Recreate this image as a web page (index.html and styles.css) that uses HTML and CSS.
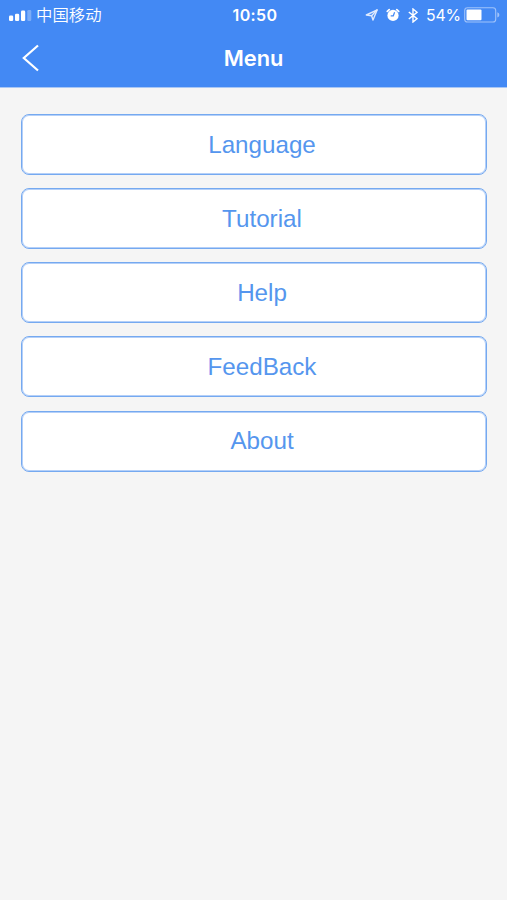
FILE: index.html
```html
<!DOCTYPE html>
<html lang="en">
<head>
<meta charset="utf-8">
<title>Menu</title>
<link rel="stylesheet" href="styles.css">
</head>
<body>
<header class="header">
  <div class="status">
    <div class="carrier">
      <svg class="signal" width="23" height="12" viewBox="0 0 23 12" fill="#fff">
        <rect x="0" y="5.4" width="4.2" height="5.6" rx="1.3"/>
        <rect x="6" y="3.8" width="4.2" height="7.2" rx="1.3"/>
        <rect x="12" y=".6" width="4.2" height="10.4" rx="1.3"/>
        <rect x="18.3" y="0" width="4" height="11" rx="1.3" opacity=".3"/>
      </svg>
      <span class="carrier-name" lang="zh">中国移动</span>
    </div>
    <span class="time">10:50</span>
    <div class="indicators">
      <svg class="location" width="14" height="14" viewBox="0 0 14 14" fill="none" stroke="#dfeafd" stroke-width="1.4" stroke-linejoin="round"><path d="M12.2 1.8 1.3 7 6.6 7.7 8 12Z"/><path d="M12.2 1.8 6.6 7.7"/></svg>
      <svg class="alarm" width="14" height="14" viewBox="0 0 14 14"><circle cx="7" cy="7.4" r="5.6" fill="#fff"/><path d="M1.3 3.4 3.2 1.7M12.7 3.4 10.8 1.7" stroke="#fff" stroke-width="1.8" stroke-linecap="round"/><path d="M8.6 4.2 7.3 7.8H4.7" fill="none" stroke="#4389f4" stroke-width="1.2"/></svg>
      <svg class="bluetooth" width="10" height="15" viewBox="0 0 10 15" fill="none" stroke="#fff" stroke-width="1.4"><path d="M.8 4 9 10.7 5 14V1L9 4.3.8 11"/></svg>
      <span class="percent">54%</span>
      <svg class="battery" width="36" height="16" viewBox="0 0 36 16"><rect x=".7" y=".7" width="31" height="14.3" rx="2.8" fill="none" stroke="#a0c3fa" stroke-width="1.1"/><rect x="2.5" y="2.5" width="15" height="10.7" rx="1" fill="#fff"/><path d="M33.3 5.3Q35.4 6 35.4 7.9T33.3 10.5Z" fill="#a0c3fa"/></svg>
    </div>
  </div>
  <nav class="navbar">
    <svg class="back" width="18" height="28" viewBox="0 0 18 28" fill="none" stroke="#fff" stroke-width="2.2"><path d="M16 1.5 1.8 14 16 26.5"/></svg>
    <h1 class="title">Menu</h1>
  </nav>
</header>
<main class="menu">
  <button class="item">Language</button>
  <button class="item">Tutorial</button>
  <button class="item">Help</button>
  <button class="item">FeedBack</button>
  <button class="item">About</button>
</main>
</body>
</html>
```
FILE: styles.css
```css
* { box-sizing: border-box; }
body {
  margin: 0;
  min-height: 100vh;
  background: #f5f5f5;
  font-family: "Liberation Sans", Arial, sans-serif;
}
.header {
  height: 88px;
  background: #4389f4;
  border-bottom: 1px solid #a9c7f5;
  color: #fff;
}
.status {
  display: grid;
  grid-template-columns: 1fr auto 1fr;
  align-items: center;
  height: 30px;
  padding: 0 7px 0 9px;
  font-family: Inter, "Noto Sans CJK SC", sans-serif;
}
.carrier, .indicators { display: flex; align-items: center; }
.signal { margin: 1px 4px 0 0; }
.carrier-name {
  margin-top: -2px;
  font: 350 16.4px/30px "Noto Sans CJK SC", sans-serif;
}
.time { margin-left: 1px; font-size: 16px; font-weight: 600; letter-spacing: .4px; }
.indicators { justify-content: flex-end; }
.alarm { margin-left: 7px; }
.bluetooth { margin-left: 8px; }
.percent { margin-left: 8px; font-size: 15.8px; letter-spacing: -.1px; }
.battery { margin-left: 3px; }
.navbar {
  display: grid;
  grid-template-columns: 1fr auto 1fr;
  align-items: center;
  height: 56px;
  padding: 0 22px;
}
.title {
  margin: 0;
  font: 600 21.8px/28px Inter, sans-serif;
}
.menu {
  display: flex;
  flex-direction: column;
  gap: 13.15px;
  padding: 26px 20px 0 21px;
}
.item {
  height: 61px;
  padding: 0 0 0 16px;
  border: 1px solid #75a9f0;
  border-radius: 8px;
  background: #fff;
  box-shadow: inset 0 0 0 1px #b5d0f8;
  color: #5596ee;
  font: 24.2px/28px "Liberation Sans", Arial, sans-serif;
}
```
